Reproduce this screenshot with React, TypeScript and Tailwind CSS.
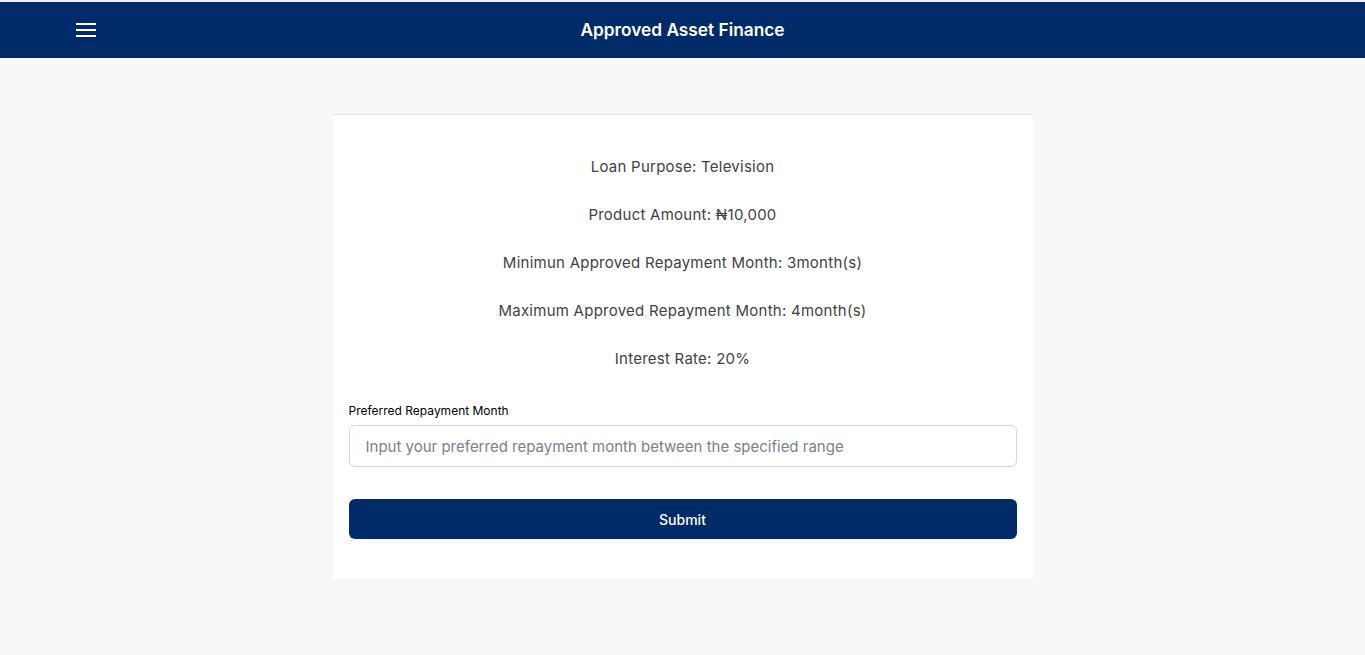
import { useState } from 'react';

const details = [
  'Loan Purpose: Television',
  'Product Amount: ₦10,000',
  'Minimun Approved Repayment Month: 3month(s)',
  'Maximum Approved Repayment Month: 4month(s)',
  'Interest Rate: 20%',
];

export default function App() {
  const [month, setMonth] = useState('');

  return (
    <div className="min-h-screen bg-[#f8f8f8] font-['Inter','Open_Sans',sans-serif]">
      {/* Header */}
      <div className="h-[2px] bg-[#eeeeee]" />
      <header className="h-14 bg-[#012a68] flex items-center relative">
        <button className="ml-[76px] flex flex-col gap-[4px] w-5">
          <span className="block h-[2px] w-5 bg-white" />
          <span className="block h-[2px] w-5 bg-white" />
          <span className="block h-[2px] w-5 bg-white" />
        </button>
        <h1 className="absolute left-1/2 -translate-x-1/2 top-[16px] text-white text-[17.3px] leading-6 font-semibold">
          Approved Asset Finance
        </h1>
      </header>

      {/* Card */}
      <div className="flex justify-center pt-14">
        <div className="w-[700px] bg-white border-t border-[#e5e5e5] px-4 pt-[40px] pb-[40px]">
          <div className="flex flex-col gap-6">
            {details.map((d) => (
              <p key={d} className="text-center text-[15px] leading-6 tracking-[0.25px] text-[#3f3f46]">
                {d}
              </p>
            ))}
          </div>

          <form className="mt-[31px]" onSubmit={(e) => e.preventDefault()}>
            <label className="block text-[12px] leading-[18px] text-black mb-[5px]">
              Preferred Repayment Month
            </label>
            <input
              value={month}
              onChange={(e) => setMonth(e.target.value)}
              placeholder="Input your preferred repayment month between the specified range"
              className="w-full h-[42px] rounded-md border border-[#d4d6dc] px-4 text-[15px] text-gray-700 placeholder:text-[#7b7f88] focus:outline-none"
            />
            <button
              type="submit"
              className="mt-8 w-full h-10 rounded-md bg-[#012a68] text-white text-[14px] font-medium"
            >
              Submit
            </button>
          </form>
        </div>
      </div>
    </div>
  );
}
